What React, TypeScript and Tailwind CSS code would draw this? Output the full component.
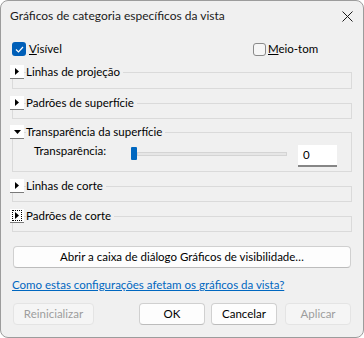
import React from "react";

function Triangle({ down }: { down?: boolean }) {
  return down ? (
    <svg width="7" height="4" viewBox="0 0 7 4"><path d="M0 0H7L3.5 4Z" fill="#000" /></svg>
  ) : (
    <svg width="4" height="7" viewBox="0 0 4 7"><path d="M0 0V7L4 3.5Z" fill="#000" /></svg>
  );
}

function Header({ label, down, focused }: { label: string; down?: boolean; focused?: boolean }) {
  return (
    <div className="relative z-10 flex items-center h-[14px]">
      <div className="w-[14px] h-[14px] bg-white border-b border-[#7a7a7a] flex items-center justify-center">
        {focused ? (
          <div className="w-[10px] h-[11px] border border-dotted border-black flex items-center justify-center">
            <Triangle />
          </div>
        ) : (
          <Triangle down={down} />
        )}
      </div>
      <span className="ml-[2px] pr-[3px] bg-[#f0f0f0] leading-[14px]">{label}</span>
    </div>
  );
}

function Group({ label, h, mt, down, focused, children }: { label: string; h: string; mt: string; down?: boolean; focused?: boolean; children?: React.ReactNode }) {
  return (
    <div className={mt}>
      <Header label={label} down={down} focused={focused} />
      <div className={`-mt-[7px] ml-[2px] border border-[#dadada] ${h}`}>{children}</div>
    </div>
  );
}

export default function App() {
  return (
    <div className="w-[364px] h-[338px] bg-[#f0f0f0] border border-[#9c9c9c] rounded-[8px] overflow-hidden text-[12px] text-black font-['Segoe_UI','Lato',sans-serif] flex flex-col">
      <div className="h-[29px] shrink-0 flex items-center justify-between pl-[9px] pr-[10px]">
        <span className="text-[#1b1b1b]">Gráficos de categoria específicos da vista</span>
        <svg width="11" height="11" viewBox="0 0 11 11" className="mt-[1px]">
          <path d="M0.5 0.5L10.5 10.5M10.5 0.5L0.5 10.5" stroke="#1b1b1b" strokeWidth="1" />
        </svg>
      </div>
      <div className="pl-[9px] pr-[11px] flex flex-col text-[11.5px]">
        <div className="mt-[12px] flex items-center h-[14px]">
          <div className="w-[241px] flex items-center ml-[2px]">
            <div className="w-[14px] h-[14px] rounded-[3px] bg-[#005fb8] flex items-center justify-center">
              <svg width="9" height="7" viewBox="0 0 9 7"><path d="M1 3.5L3.5 6L8 1" stroke="#fff" strokeWidth="1.2" fill="none" /></svg>
            </div>
            <span className="ml-[3px]"><span className="underline">V</span>isível</span>
          </div>
          <div className="flex items-center">
            <div className="w-[13px] h-[13px] rounded-[3px] border border-[#8a8a8a] bg-[#f6f6f6]" />
            <span className="ml-[2px]"><span className="underline">M</span>eio-tom</span>
          </div>
        </div>
        <Group label="Linhas de projeção" h="h-[17px]" mt="mt-[9px]" />
        <Group label="Padrões de superfície" h="h-[16px]" mt="mt-[7px]" />
        <Group label="Transparência da superfície" h="h-[40px]" mt="mt-[6px]" down>
          <div className="flex items-start pl-[21px]">
            <span className="w-[97px] mt-[10px] leading-[16px]">Transparência:</span>
            <div className="w-[156px] mt-[14px] flex items-center h-[13px]">
              <div className="w-[6px] h-[13px] bg-[#0067c0] rounded-[1px]" />
              <div className="flex-1 h-[4px] bg-[#e6e6e6] border border-[#d4d4d4]" />
            </div>
            <div className="ml-[11px] mt-[12px] w-[39px] h-[22px] bg-white border-b-2 border-[#868686] flex items-center pl-[5px]">0</div>
          </div>
        </Group>
        <Group label="Linhas de corte" h="h-[16px]" mt="mt-[7px]" />
        <Group label="Padrões de corte" h="h-[16px]" mt="mt-[7px]" focused />
        <button className="mt-[14px] ml-[3px] mr-[1px] h-[22px] bg-[#fdfdfd] border border-[#d0d0d0] border-b-[#bcbcbc] rounded-[4px] text-black">
          Abrir a caixa de diálogo Gráficos de visibilidade…
        </button>
        <a className="mt-[9px] ml-[2px] leading-[16px] text-[#0067c0] underline cursor-pointer">Como estas configurações afetam os gráficos da vista?</a>
        <div className="mt-[10px] flex items-center">
          <button className="ml-[3px] w-[81px] h-[22px] bg-[#f5f5f5] border border-[#e4e4e4] rounded-[4px] text-[#9d9d9d]">Reinicializar</button>
          <button className="ml-auto w-[66px] h-[22px] bg-[#fdfdfd] border border-[#d0d0d0] border-b-[#bcbcbc] rounded-[4px]">OK</button>
          <button className="ml-[6px] w-[66px] h-[22px] bg-[#fdfdfd] border border-[#d0d0d0] border-b-[#bcbcbc] rounded-[4px]">Cancelar</button>
          <button className="ml-[8px] mr-[1px] w-[66px] h-[22px] bg-[#f5f5f5] border border-[#e4e4e4] rounded-[4px] text-[#9d9d9d]">Aplicar</button>
        </div>
      </div>
    </div>
  );
}
